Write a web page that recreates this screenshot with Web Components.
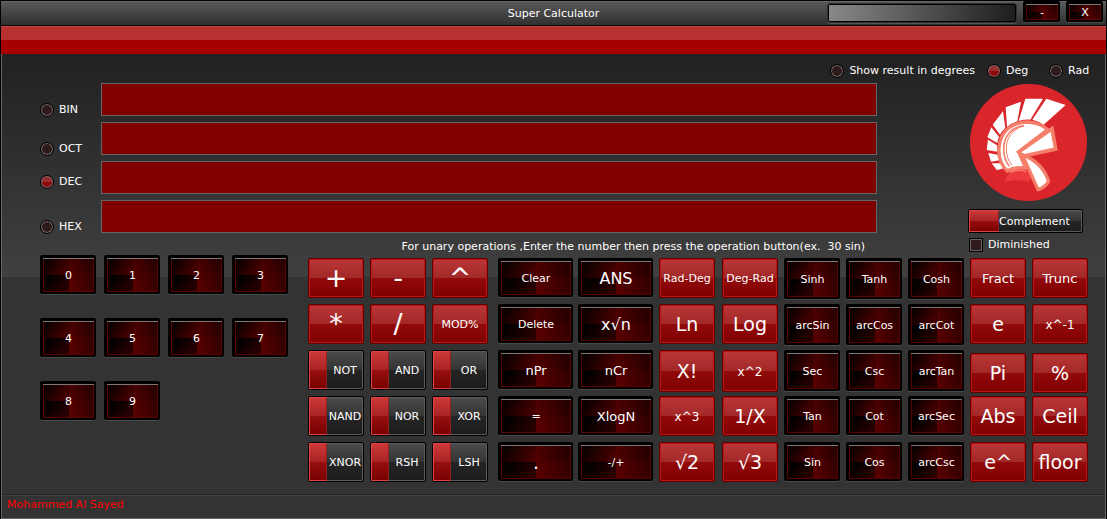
<!DOCTYPE html>
<html lang="en">
<head>
<meta charset="utf-8">
<title>Super Calculator</title>
<style>
  body { margin: 0; background: #333; }
</style>
</head>
<body>
<super-calculator></super-calculator>

<template id="t-key">
  <style>
    :host { display: block; height: 40px; }
    :host([tall]) { height: 42px; }
    button {
      box-sizing: border-box; width: 100%; height: 100%; margin: 0; padding: 2px 0 0;
      font: 11px/14px "DejaVu Sans", Verdana, sans-serif; color: #fff;
      white-space: nowrap; border-radius: 2px; position: relative;
      display: flex; align-items: center; justify-content: center;
    }
    :host([size="12"]) button { font-size: 12px; }
    :host([size="13"]) button { font-size: 13px; }
    :host([size="16"]) button { font-size: 16px; }
    :host([size="19"]) button { font-size: 19px; padding: 0; }
    :host([size="27"]) button { font-size: 27px; padding: 0; }

    :host([skin="dark"]) button {
      border: 3px solid #000; border-bottom-width: 2px; border-right-width: 2px;
      box-shadow: inset 0 1px #7c7878, inset 0 0 0 1px #5c0000;
      background:
        linear-gradient(120deg, #080000 10%, #500000) 0 0 / 50% 50% no-repeat,
        linear-gradient(245deg, #220000 5%, #540000) 100% 0 / 50% 50% no-repeat,
        linear-gradient(130deg, #030000 20%, #300000) 0 100% / 50% 50% no-repeat,
        linear-gradient(80deg, #560000 10%, #300000) 100% 100% / 50% 50% no-repeat,
        #200000;
    }
    :host([skin="dark"]) { box-shadow: inset 0 -1px #4a4a4a; border-radius: 2px; }
    :host([skin="dark"]) button { height: calc(100% - 1px); }

    :host([skin="red"]) button {
      border: 1px solid #5a0000; box-shadow: inset 0 0 0 1px #c01414;
      background: linear-gradient(#bb3636, #a22828 50%, #920a0a 50%, #800000);
    }
    :host([skin="toggle"]) button {
      border: 1px solid #000; padding-left: 18px;
      box-shadow: inset 0 0 0 1px #5a5a5a;
      background: linear-gradient(#4c4c4c, #333 50%, #252525 50%, #1c1c1c);
    }
    .thumb { display: none; }
    :host([skin="toggle"]) .thumb {
      display: block; position: absolute; left: 0; top: 0; bottom: 0; width: 18px;
      box-sizing: border-box; border: 1px solid #dc4444; border-right-color: #8c2020;
      background: linear-gradient(#cd3737, #a82424 50%, #981010 50%, #780000);
    }
    :host([wide]) { height: 24px; }
    :host([wide]) .thumb { width: 30px !important; }
    :host([wide]) button { justify-content: flex-start; padding-left: 30px !important; }
  </style>
  <button type="button"><span class="thumb"></span><slot></slot></button>
</template>

<template id="t-group">
  <style>
    :host {
      display: grid; grid-template-columns: repeat(var(--cols, 3), minmax(0, 1fr));
      grid-template-rows: var(--rows, 46px 46px 46px 46px 40px);
      column-gap: var(--gap, 6px); align-items: start; align-content: start;
      padding: 3px 0 0;
    }
  </style>
  <slot></slot>
</template>

<template id="t-radios">
  <style>
    :host { display: grid; font: 11px/16px "DejaVu Sans", Verdana, sans-serif; color: #fff; }
    :host([column]) { grid-template-rows: 35px 39px 33px 45px; align-items: end; }
    :host([row]) { grid-template-columns: auto 50px 42px; column-gap: 12px; justify-content: end; }
    label { display: flex; align-items: center; gap: 5px; white-space: nowrap; }
    input {
      appearance: none; box-sizing: border-box; width: 14px; height: 14px; margin: 0; flex: none;
      border: 1px solid #000; border-radius: 50%; background: #2e1a1a;
      box-shadow: inset 0 0 0 1px #7a7070;
    }
    input:checked { background: linear-gradient(#9a2c2c 50%, #8a0808 50%); }
  </style>
</template>

<template id="t-check">
  <style>
    :host { display: block; font: 11px/16px "DejaVu Sans", Verdana, sans-serif; color: #fff; }
    label { display: flex; align-items: center; gap: 5px; }
    input {
      appearance: none; box-sizing: border-box; width: 14px; height: 14px; margin: 0;
      border: 1px solid #000; background: #2e1a1a; box-shadow: inset 0 0 0 1px #6a6262;
    }
    input:checked { background: #a01818; }
  </style>
  <label><input type="checkbox"><slot></slot></label>
</template>

<template id="t-fields">
  <style>
    :host { display: grid; gap: 6px; }
    input {
      box-sizing: border-box; width: 100%; height: 33px; margin: 0; padding: 0 6px;
      border: 1px solid #666; border-radius: 0; background: #800000; color: #fff;
      font: 16px/20px "DejaVu Sans", Verdana, sans-serif; outline: none;
    }
  </style>
  <input type="text" aria-label="Binary value">
  <input type="text" aria-label="Octal value">
  <input type="text" aria-label="Decimal value">
  <input type="text" aria-label="Hexadecimal value">
</template>

<template id="t-logo">
  <style>:host { display: block; } svg { display: block; width: 100%; }</style>
  <svg viewBox="60 28 351 351" aria-hidden="true">
    <circle cx="235.500" cy="203.500" r="175.500" fill="#da252b"/>
    <g fill="#fff">
      <path d="M289 72 347 91 281 150Q266 139 247 135Z"/>
      <path d="M226 72 279 72 241 135Q222 134 206 139Z"/>
      <path d="M167 98 213 81 202 140Q184 146 171 157Z"/>
      <path d="M159 110 166 160Q156 168 150 180L128 150Z"/>
      <path d="M124 158 147 186Q143 195 142 205L112 188Z"/>
      <path d="M114 195 141 212 142 231 110 226Z"/>
      <path d="M115 235 143 240 149 257 123 261Z"/>
      <path d="M125 266 152 266 160 281 141 287Z"/>
    </g>
    <path d="M163 322C172 296 186 280 208 278C228 278 240 297 247 303L238 322C216 315 188 315 163 322Z" fill="#ee3a3e"/>
    <path d="M172 289Q143 262 147 218C152 167 189 142 232 142Q271 144 293 165L206 231 227 280Q192 276 172 289Z" fill="#fff" stroke="#f67f6b" stroke-width="10"/>
    <path d="M222 153C184 157 162 185 161 222C161 244 168 262 178 275" fill="none" stroke="#f67f6b" stroke-width="5"/>
    <path d="M222 153C184 166 169 190 169 222C169 244 175 258 186 272" fill="none" stroke="#f67f6b" stroke-width="3"/>
    <path d="M306 162 317 223 217 245 206 232Z" fill="#fff" stroke="#f67f6b" stroke-width="11"/>
    <path d="M217 240Q278 264 296 320 286 337 264 345L221 249Z" fill="#fff" stroke="#f67f6b" stroke-width="10" stroke-linejoin="round"/>
    <path d="M181 294Q204 281 229 291" fill="none" stroke="#f67f6b" stroke-width="4"/>
  </svg>
</template>

<template id="t-title">
  <style>
    :host {
      display: grid; grid-template-columns: 1fr auto 1fr; align-items: center; height: 24px;
      background: linear-gradient(#5a5a5a, #303030); border-bottom: 1px solid #000;
      box-shadow: inset 0 1px #666;
    }
    h1 { grid-column: 2; margin: 0; font: 11px/14px "DejaVu Sans", Verdana, sans-serif; color: #fff; padding-top: 2px; }
    .tools { display: flex; justify-content: flex-end; align-items: center; gap: 6px; padding-right: 3px; }
    .grip {
      box-sizing: border-box; width: 190px; height: 20px; border: 1px solid #303030; border-radius: 3px;
      box-shadow: inset 0 0 0 1px #000, 0 1px #555; background: linear-gradient(100deg, #8a8a8a, #1c1c1c);
    }
    calc-key { width: 37px; height: 22px; margin-bottom: 2px; }
  </style>
  <h1>Super Calculator</h1>
  <div class="tools">
    <div class="grip"></div>
    <calc-key skin="dark">-</calc-key>
    <calc-key skin="dark">X</calc-key>
  </div>
</template>

<template id="t-app">
  <style>
    :host {
      box-sizing: border-box; display: flex; flex-direction: column; min-height: 100vh;
      border: 1px solid #000; background: #333;
      font: 11px/14px "DejaVu Sans", Verdana, sans-serif; color: #fff;
    }
    .ribbon { height: 28px; background: linear-gradient(#b83030 50%, #a80000 50%); box-shadow: inset 0 1px #c84848; }
    .frame { flex: 1; display: flex; flex-direction: column; border: 1px solid #666; border-top: 0; }
    main {
      flex: 1; padding: 9px 17px 12px 38px;
      background: linear-gradient(#212121, #404040 223px, #333 223px);
    }
    .modes { margin: 0 -3px 4px 0; }
    .entry { display: grid; grid-template-columns: 61px minmax(0, 1fr) 120px; align-items: start; }
    .side { margin-top: 1px; }
    helmet-logo { width: 117px; margin: 0 0 8px 2px; }
    .side calc-key { width: 115px; margin-bottom: 4px; }
    .side check-option { margin-left: 1px; }
    .values { margin-right: 91px; }
    .hint { margin: 7px 12px 0 0; text-align: right; white-space: pre; }
    .pad { display: grid; margin-top: 1px; column-gap: 6px;
      grid-template-columns: minmax(0,262fr) minmax(0,184fr) minmax(0,155fr) minmax(0,119fr) minmax(0,180fr) minmax(0,118fr); }
    .digits { --cols: 4; --gap: 8px; --rows: 63px 63px 40px; padding: 0 14px 0 0; }
    .ops { padding-right: 4px; }
    .edit { --cols: 2; --gap: 5px; }
    .logs { --cols: 2; --gap: 7px; }
    .funcs { --cols: 2; --rows: 46px 49px 43px 46px 40px; }
    footer {
      border-top: 1px solid #222; box-shadow: inset 0 1px #404040;
      padding: 3px 5px 6px; color: #f00;
    }
  </style>
  <title-bar></title-bar>
  <div class="ribbon"></div>
  <div class="frame">
    <main>
      <radio-set class="modes" row items="Show result in degrees:result,Deg:angle:on,Rad:angle"></radio-set>
      <section class="entry">
        <radio-set column items="BIN:base,OCT:base,DEC:base:on,HEX:base"></radio-set>
        <div class="values">
          <value-fields></value-fields>
          <p class="hint">For unary operations ,Enter the number then press the operation button(ex.  30 sin)</p>
        </div>
        <div class="side">
          <helmet-logo></helmet-logo>
          <calc-key skin="toggle" wide>Complement</calc-key>
          <check-option>Diminished</check-option>
        </div>
      </section>
      <section class="pad">
        <key-group class="digits">
          <calc-key skin="dark">0</calc-key><calc-key skin="dark">1</calc-key>
          <calc-key skin="dark">2</calc-key><calc-key skin="dark">3</calc-key>
          <calc-key skin="dark">4</calc-key><calc-key skin="dark">5</calc-key>
          <calc-key skin="dark">6</calc-key><calc-key skin="dark">7</calc-key>
          <calc-key skin="dark">8</calc-key><calc-key skin="dark">9</calc-key>
        </key-group>
        <key-group class="ops">
          <calc-key skin="red" size="27">+</calc-key><calc-key skin="red" size="27">-</calc-key><calc-key skin="red" size="27">^</calc-key>
          <calc-key skin="red" size="27">*</calc-key><calc-key skin="red" size="27">/</calc-key><calc-key skin="red">MOD%</calc-key>
          <calc-key skin="toggle">NOT</calc-key><calc-key skin="toggle">AND</calc-key><calc-key skin="toggle">OR</calc-key>
          <calc-key skin="toggle">NAND</calc-key><calc-key skin="toggle">NOR</calc-key><calc-key skin="toggle">XOR</calc-key>
          <calc-key skin="toggle">XNOR</calc-key><calc-key skin="toggle">RSH</calc-key><calc-key skin="toggle">LSH</calc-key>
        </key-group>
        <key-group class="edit">
          <calc-key skin="dark">Clear</calc-key><calc-key skin="dark" size="16">ANS</calc-key>
          <calc-key skin="dark">Delete</calc-key><calc-key skin="dark" size="16">x√n</calc-key>
          <calc-key skin="dark" size="13">nPr</calc-key><calc-key skin="dark" size="13">nCr</calc-key>
          <calc-key skin="dark">=</calc-key><calc-key skin="dark" size="13">XlogN</calc-key>
          <calc-key skin="dark" size="19">.</calc-key><calc-key skin="dark">-/+</calc-key>
        </key-group>
        <key-group class="logs">
          <calc-key skin="red">Rad-Deg</calc-key><calc-key skin="red">Deg-Rad</calc-key>
          <calc-key skin="red" size="19">Ln</calc-key><calc-key skin="red" size="19">Log</calc-key>
          <calc-key skin="red" size="19" tall>X!</calc-key><calc-key skin="red" size="12" tall>x^2</calc-key>
          <calc-key skin="red" size="12">x^3</calc-key><calc-key skin="red" size="19">1/X</calc-key>
          <calc-key skin="red" size="19">√2</calc-key><calc-key skin="red" size="19">√3</calc-key>
        </key-group>
        <key-group class="trig">
          <calc-key skin="dark" tall>Sinh</calc-key><calc-key skin="dark" tall>Tanh</calc-key><calc-key skin="dark" tall>Cosh</calc-key>
          <calc-key skin="dark" tall>arcSin</calc-key><calc-key skin="dark" tall>arcCos</calc-key><calc-key skin="dark" tall>arcCot</calc-key>
          <calc-key skin="dark" tall>Sec</calc-key><calc-key skin="dark" tall>Csc</calc-key><calc-key skin="dark" tall>arcTan</calc-key>
          <calc-key skin="dark">Tan</calc-key><calc-key skin="dark">Cot</calc-key><calc-key skin="dark">arcSec</calc-key>
          <calc-key skin="dark">Sin</calc-key><calc-key skin="dark">Cos</calc-key><calc-key skin="dark">arcCsc</calc-key>
        </key-group>
        <key-group class="funcs">
          <calc-key skin="red" size="13">Fract</calc-key><calc-key skin="red" size="13">Trunc</calc-key>
          <calc-key skin="red" size="19">e</calc-key><calc-key skin="red" size="12">x^-1</calc-key>
          <calc-key skin="red" size="19">Pi</calc-key><calc-key skin="red" size="19">%</calc-key>
          <calc-key skin="red" size="19">Abs</calc-key><calc-key skin="red" size="19">Ceil</calc-key>
          <calc-key skin="red" size="19">e^</calc-key><calc-key skin="red" size="19">floor</calc-key>
        </key-group>
      </section>
    </main>
    <footer>Mohammed Al Sayed</footer>
  </div>
</template>

<script>
  class Templated extends HTMLElement {
    constructor() {
      super();
      this.attachShadow({ mode: 'open' })
        .append(document.getElementById(this.constructor.template).content.cloneNode(true));
    }
  }
  const define = (tag, template) =>
    customElements.define(tag, class extends Templated { static template = template; });

  define('calc-key', 't-key');
  define('key-group', 't-group');
  define('check-option', 't-check');
  define('value-fields', 't-fields');
  define('helmet-logo', 't-logo');
  define('title-bar', 't-title');

  // items="Label:group[:on],..." - one radio per entry
  customElements.define('radio-set', class extends Templated {
    static template = 't-radios';
    connectedCallback() {
      if (this.shadowRoot.querySelector('label')) return;
      for (const item of this.getAttribute('items').split(',')) {
        const [text, group, on] = item.split(':');
        const label = document.createElement('label');
        const input = document.createElement('input');
        input.type = 'radio';
        input.name = group;
        input.checked = on === 'on';
        label.append(input, text);
        this.shadowRoot.append(label);
      }
    }
  });

  define('super-calculator', 't-app');
</script>
</body>
</html>
